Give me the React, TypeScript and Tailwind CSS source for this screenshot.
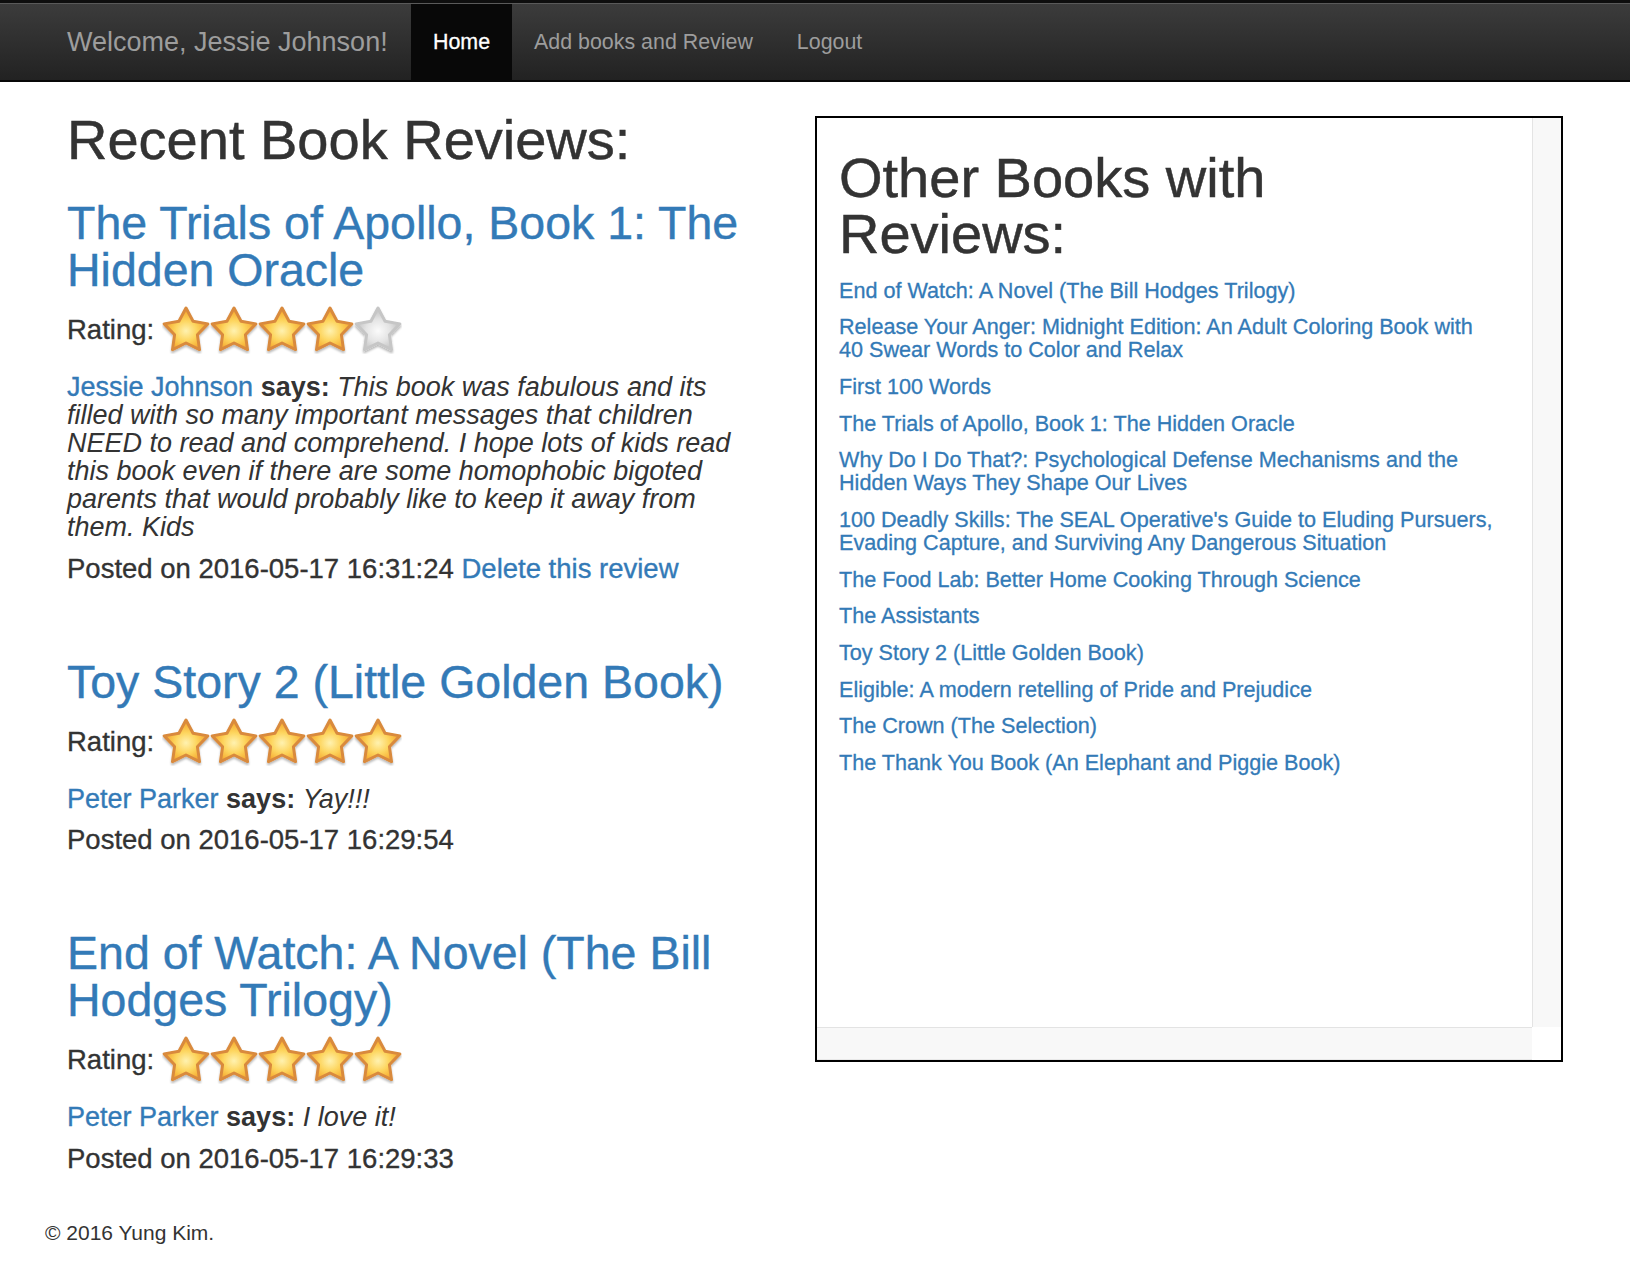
import { useId } from "react";

interface ReviewItem {
  title: string;
  rating: number;
  user: string;
  text: string;
  posted: string;
  canDelete?: boolean;
}

const reviews: ReviewItem[] = [
  {
    title: "The Trials of Apollo, Book 1: The Hidden Oracle",
    rating: 4,
    user: "Jessie Johnson",
    text: "This book was fabulous and its filled with so many important messages that children NEED to read and comprehend. I hope lots of kids read this book even if there are some homophobic bigoted parents that would probably like to keep it away from them. Kids",
    posted: "2016-05-17 16:31:24",
    canDelete: true,
  },
  {
    title: "Toy Story 2 (Little Golden Book)",
    rating: 5,
    user: "Peter Parker",
    text: "Yay!!!",
    posted: "2016-05-17 16:29:54",
  },
  {
    title: "End of Watch: A Novel (The Bill Hodges Trilogy)",
    rating: 5,
    user: "Peter Parker",
    text: "I love it!",
    posted: "2016-05-17 16:29:33",
  },
];

const otherBooks = [
  "End of Watch: A Novel (The Bill Hodges Trilogy)",
  "Release Your Anger: Midnight Edition: An Adult Coloring Book with 40 Swear Words to Color and Relax",
  "First 100 Words",
  "The Trials of Apollo, Book 1: The Hidden Oracle",
  "Why Do I Do That?: Psychological Defense Mechanisms and the Hidden Ways They Shape Our Lives",
  "100 Deadly Skills: The SEAL Operative's Guide to Eluding Pursuers, Evading Capture, and Surviving Any Dangerous Situation",
  "The Food Lab: Better Home Cooking Through Science",
  "The Assistants",
  "Toy Story 2 (Little Golden Book)",
  "Eligible: A modern retelling of Pride and Prejudice",
  "The Crown (The Selection)",
  "The Thank You Book (An Elephant and Piggie Book)",
];

// chubby five-point star, tips rounded by the stroke join
const STAR_POINTS =
  "24,2 31.05,15.29 45.87,17.89 35.41,28.71 37.52,43.61 24,37 10.48,43.61 12.59,28.71 2.13,17.89 16.95,15.29";

function Star({ filled }: { filled: boolean }) {
  const id = useId().replace(/:/g, "");
  const grad = `g${id}`;
  const shadow = `s${id}`;
  return (
    <svg width="48" height="48" viewBox="0 0 48 48" className="block">
      <defs>
        <radialGradient id={grad} cx="50%" cy="55%" r="55%">
          {filled ? (
            <>
              <stop offset="0" stopColor="#fff2b0" />
              <stop offset="0.45" stopColor="#fdd55e" />
              <stop offset="1" stopColor="#f49c20" />
            </>
          ) : (
            <>
              <stop offset="0" stopColor="#fbfbfb" />
              <stop offset="0.5" stopColor="#e4e4e4" />
              <stop offset="1" stopColor="#bcbcbc" />
            </>
          )}
        </radialGradient>
        <filter id={shadow} x="-20%" y="-20%" width="140%" height="150%">
          <feDropShadow dx="0" dy="2" stdDeviation="1.2" floodColor="#000" floodOpacity="0.28" />
        </filter>
      </defs>
      <polygon
        points={STAR_POINTS}
        fill={`url(#${grad})`}
        stroke={filled ? "#d98a3d" : "#c6c6c6"}
        strokeWidth="3"
        strokeLinejoin="round"
        filter={`url(#${shadow})`}
      />
    </svg>
  );
}

function Review({ review, first }: { review: ReviewItem; first: boolean }) {
  return (
    <article className={first ? "mt-[32px]" : "mt-[76px]"}>
      <h2 className="text-[46.5px] leading-[47px] text-[#337ab7] [-webkit-text-stroke:0.4px]">
        <a href="#">{review.title}</a>
      </h2>
      <div className="mt-[12px] flex h-[48px] items-center">
        <span className="text-[27.5px] leading-[28px] [-webkit-text-stroke:0.35px]">Rating:</span>
        <div className="ml-[8px] flex">
          {[1, 2, 3, 4, 5].map((n) => (
            <Star key={n} filled={n <= review.rating} />
          ))}
        </div>
      </div>
      <p className="mt-[19px] text-[27px] leading-[28px]">
        <a href="#" className="text-[#337ab7] [-webkit-text-stroke:0.35px]">
          {review.user}
        </a>{" "}
        <b>says:</b> <i>{review.text}</i>
      </p>
      <p className="mt-[13.5px] text-[27.5px] leading-[28px] [-webkit-text-stroke:0.35px]">
        Posted on {review.posted}
        {review.canDelete && (
          <>
            {" "}
            <a href="#" className="text-[#337ab7]">
              Delete this review
            </a>
          </>
        )}
      </p>
    </article>
  );
}

export default function App() {
  return (
    <div className="min-h-screen bg-white font-['Liberation_Sans',Arial,sans-serif] text-[#333]">
      <nav className="border-t-[3px] border-b-2 border-t-[#0e0e0e] border-b-[#080808] bg-[linear-gradient(to_bottom,#3c3c3c,#222)]">
        <div className="flex h-[77px] border-t border-[#5a5a5a] pl-[67px]">
          <a href="#" className="flex w-[344px] items-center text-[27px] text-[#9d9d9d]">
            Welcome, Jessie Johnson!
          </a>
          <a href="#" className="flex items-center bg-[#080808] px-[22px] text-[21.4px] text-white [-webkit-text-stroke:0.3px]">
            Home
          </a>
          <a href="#" className="flex items-center px-[22px] text-[21.4px] text-[#9d9d9d]">
            Add books and Review
          </a>
          <a href="#" className="flex items-center px-[22px] text-[21.4px] text-[#9d9d9d]">
            Logout
          </a>
        </div>
      </nav>

      <main className="flex gap-[60px] px-[67px]">
        <section className="w-[688px] shrink-0">
          <h1 className="mt-[30px] text-[56px] leading-[56px] [-webkit-text-stroke:0.5px]">
            Recent Book Reviews:
          </h1>
          {reviews.map((r, i) => (
            <Review key={r.title} review={r} first={i === 0} />
          ))}
        </section>

        <aside className="mt-[34px] flex h-[946px] w-[748px] shrink-0 flex-col border-2 border-black">
          <div className="flex min-h-0 flex-1">
            <div className="flex-1 overflow-hidden pl-[22px] pr-[35px] pt-[32px]">
              <h1 className="max-w-[600px] text-[56px] leading-[56px] [-webkit-text-stroke:0.5px]">
                Other Books with Reviews:
              </h1>
              <ul className="mt-[16.5px] flex flex-col gap-[13.7px]">
                {otherBooks.map((b) => (
                  <li key={b} className="text-[21.6px] leading-[23px] text-[#337ab7] [-webkit-text-stroke:0.3px]">
                    <a href="#">{b}</a>
                  </li>
                ))}
              </ul>
            </div>
            <div className="w-[29px] border-l border-[#e4e4e4] bg-[#f8f8f8]" />
          </div>
          <div className="flex h-[33px]">
            <div className="flex-1 border-y border-t-[#e3e3e3] border-b-[#e8e8e8] bg-[#f8f8f8]" />
            <div className="w-[29px] bg-white" />
          </div>
        </aside>
      </main>

      <footer className="mt-[45px] px-[45px] text-[21px] leading-[30px]">© 2016 Yung Kim.</footer>
    </div>
  );
}
